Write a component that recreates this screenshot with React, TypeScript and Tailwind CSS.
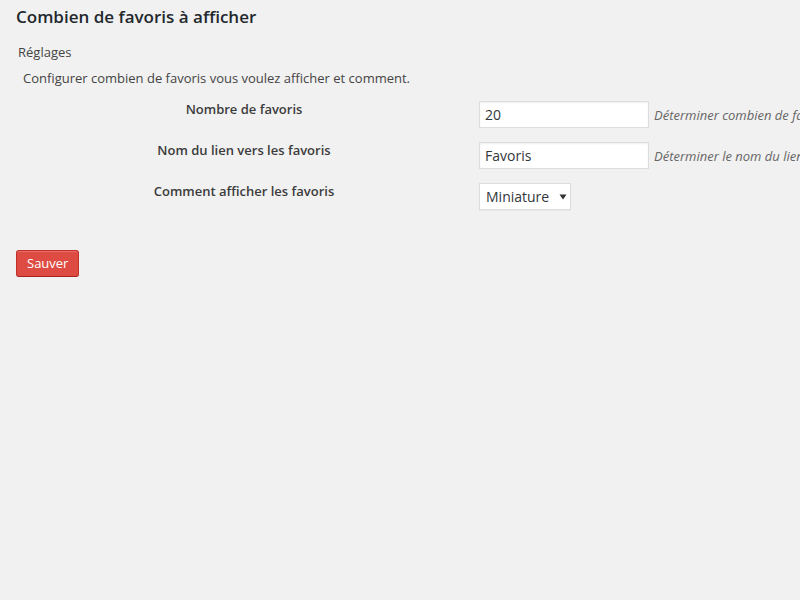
export default function App() {
  const rows = [
    { label: 'Nombre de favoris', value: '20', desc: 'Déterminer combien de favoris afficher.' },
    { label: 'Nom du lien vers les favoris', value: 'Favoris', desc: 'Déterminer le nom du lien vers les favoris.' },
  ]

  return (
    <div
      className="min-h-screen w-full overflow-hidden bg-[#f1f1f1] text-[#444] text-[13px]"
      style={{ fontFamily: '"Open Sans", sans-serif' }}
    >
      <div className="pl-4 pt-[5px]">
        <h2 className="text-[17px] font-semibold text-[#23282d] leading-[24px]">
          Combien de favoris à afficher
        </h2>
        <div className="mt-[14px] pl-[2px] leading-[18px]">Réglages</div>
        <p className="mt-[8px] pl-[7px] leading-[18px]">
          Configurer combien de favoris vous voulez afficher et comment.
        </p>

        <div className="mt-[13px] flex flex-col gap-[13px]">
          {rows.map((r) => (
            <div key={r.label} className="flex items-start whitespace-nowrap">
              <div className="w-[463px] pr-[7px] shrink-0 text-center font-semibold text-[#3c3c3c] leading-[18px]">
                {r.label}
              </div>
              <input
                defaultValue={r.value}
                className="mt-[1px] w-[170px] h-[27px] shrink-0 bg-white border border-[#ddd] shadow-[inset_0_1px_2px_rgba(0,0,0,0.07)] px-[5px] text-[14px] text-[#32373c] outline-none"
                style={{ fontFamily: '"Open Sans", sans-serif' }}
              />
              <span className="ml-[5px] mt-[6px] italic text-[#666] leading-[18px]">{r.desc}</span>
            </div>
          ))}
          <div className="flex items-start whitespace-nowrap">
            <div className="w-[463px] pr-[7px] shrink-0 text-center font-semibold text-[#3c3c3c] leading-[18px]">
              Comment afficher les favoris
            </div>
            <div className="mt-[1px] h-[27px] w-[92px] bg-white border border-[#ddd] shadow-[0_1px_1px_rgba(0,0,0,0.04)] flex items-center pl-[6px] text-[14px] text-[#32373c]">
              <span>Miniature</span>
              <svg width="8" height="6" viewBox="0 0 8 6" className="ml-[10px]">
                <path d="M0.5 0.5 H7.5 L4 5.5 Z" fill="#333" />
              </svg>
            </div>
          </div>
        </div>

        <button className="mt-[40px] h-[27px] px-[10px] bg-[#dd4b43] border border-[#c1302a] border-b-[#a8221d] rounded-[3px] text-white text-[13px] leading-[25px] shadow-[inset_0_1px_0_rgba(255,255,255,0.2)]">
          Sauver
        </button>
      </div>
    </div>
  )
}
